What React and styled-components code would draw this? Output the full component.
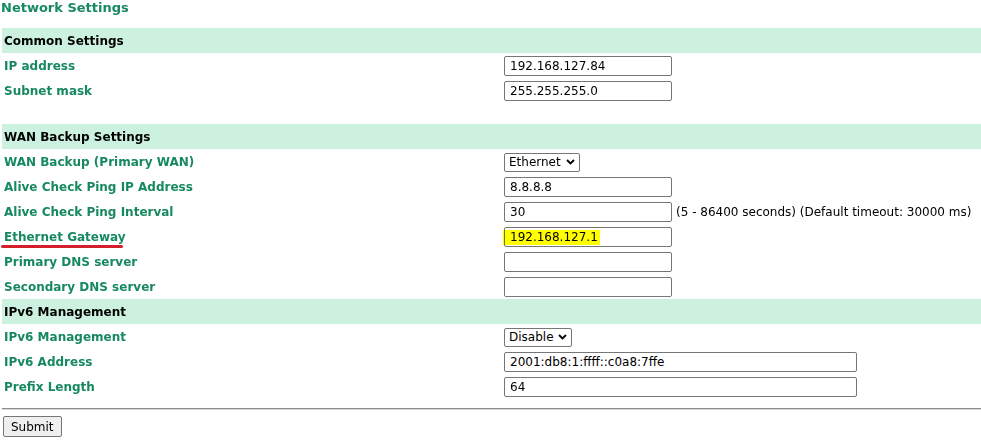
import React from "react";
import styled, { createGlobalStyle } from "styled-components";

const Global = createGlobalStyle`
  html, body { margin: 0; padding: 0; background: #fff; }
  body { font-family: "DejaVu Sans", Verdana, sans-serif; font-size: 12px; color: #000; overflow: hidden; }
`;

const GREEN = "#16895f";
const BAND = "#ccf2df";

const Page = styled.div`
  width: 981px;
`;

const Title = styled.h1`
  margin: 0 0 0 1px;
  height: 28px;
  font-size: 13px;
  line-height: 16px;
  font-weight: bold;
  color: ${GREEN};
`;

const Form = styled.div`
  margin-left: 2px;
  display: grid;
  grid-template-columns: 502px 1fr;
`;

const Band = styled.div`
  grid-column: 1 / -1;
  box-sizing: border-box;
  height: 25px;
  display: flex;
  align-items: center;
  padding: 1px 0 0 2px;
  background: ${BAND};
  font-weight: bold;
  font-size: 12px;
`;

const Spacer = styled.div`
  grid-column: 1 / -1;
  height: 21px;
`;

const Label = styled.div`
  position: relative;
  box-sizing: border-box;
  height: 25px;
  display: flex;
  align-items: center;
  padding: 1px 0 0 2px;
  font-weight: bold;
  color: ${GREEN};
`;

const Value = styled.div`
  position: relative;
  box-sizing: border-box;
  height: 25px;
  display: flex;
  align-items: center;
  padding-top: 1px;
  gap: 4px;
`;

const Input = styled.input`
  box-sizing: border-box;
  width: ${(p) => p.$w || 168}px;
  height: 20px;
  margin: 0;
  padding: 0 5px;
  border: 1px solid #767676;
  border-radius: 2px;
  font-family: "DejaVu Sans", Verdana, sans-serif;
  font-size: 12px;
  color: #000;
  background: #fff;
  outline: none;
`;

const SelectBox = styled.div`
  box-sizing: border-box;
  width: ${(p) => p.$w}px;
  height: 19px;
  display: flex;
  align-items: center;
  justify-content: space-between;
  padding: 0 4px;
  border: 1px solid #767676;
  border-radius: 2px;
  font-size: 12px;
  background: #fff;
`;

const Hint = styled.span`
  font-size: 12px;
  white-space: nowrap;
`;

const Underline = styled.span`
  position: absolute;
  left: -1px;
  top: 21px;
  width: 122px;
  height: 3px;
  border-radius: 2px;
  background: #d3202a;
`;

const Highlight = styled.span`
  position: absolute;
  left: -1px;
  top: 6px;
  width: 97px;
  height: 15px;
  background: #ffff00;
  mix-blend-mode: multiply;
  pointer-events: none;
`;

const Rule = styled.hr`
  margin: 9px 0 0 2px;
  border: none;
  border-top: 1px solid #8c8c8c;
  border-bottom: 1px solid #d9d9d9;
  height: 0;
`;

const Button = styled.button`
  margin: 6px 0 0 3px;
  height: 21px;
  padding: 0 7px;
  border: 1px solid #767676;
  border-radius: 2px;
  background: #efefef;
  font-family: "DejaVu Sans", Verdana, sans-serif;
  font-size: 12px;
  color: #000;
`;

const Chevron = () => (
  <svg width="9" height="6" viewBox="0 0 9 6">
    <path d="M1 1 L4.5 4.5 L8 1" fill="none" stroke="#000" strokeWidth="1.8" />
  </svg>
);

const Select = ({ w, children }) => (
  <SelectBox $w={w}>
    <span>{children}</span>
    <Chevron />
  </SelectBox>
);

export default function App() {
  return (
    <Page>
      <Global />
      <Title>Network Settings</Title>
      <Form>
        <Band>Common Settings</Band>
        <Label>IP address</Label>
        <Value><Input defaultValue="192.168.127.84" /></Value>
        <Label>Subnet mask</Label>
        <Value><Input defaultValue="255.255.255.0" /></Value>
        <Spacer />
        <Band>WAN Backup Settings</Band>
        <Label>WAN Backup (Primary WAN)</Label>
        <Value><Select w={76}>Ethernet</Select></Value>
        <Label>Alive Check Ping IP Address</Label>
        <Value><Input defaultValue="8.8.8.8" /></Value>
        <Label>Alive Check Ping Interval</Label>
        <Value>
          <Input defaultValue="30" />
          <Hint>(5 - 86400 seconds) (Default timeout: 30000 ms)</Hint>
        </Value>
        <Label>
          Ethernet Gateway
          <Underline />
        </Label>
        <Value>
          <Input defaultValue="192.168.127.1" />
          <Highlight />
        </Value>
        <Label>Primary DNS server</Label>
        <Value><Input defaultValue="" /></Value>
        <Label>Secondary DNS server</Label>
        <Value><Input defaultValue="" /></Value>
        <Band>IPv6 Management</Band>
        <Label>IPv6 Management</Label>
        <Value><Select w={68}>Disable</Select></Value>
        <Label>IPv6 Address</Label>
        <Value><Input $w={353} defaultValue="2001:db8:1:ffff::c0a8:7ffe" /></Value>
        <Label>Prefix Length</Label>
        <Value><Input $w={353} defaultValue="64" /></Value>
      </Form>
      <Rule />
      <Button>Submit</Button>
    </Page>
  );
}
